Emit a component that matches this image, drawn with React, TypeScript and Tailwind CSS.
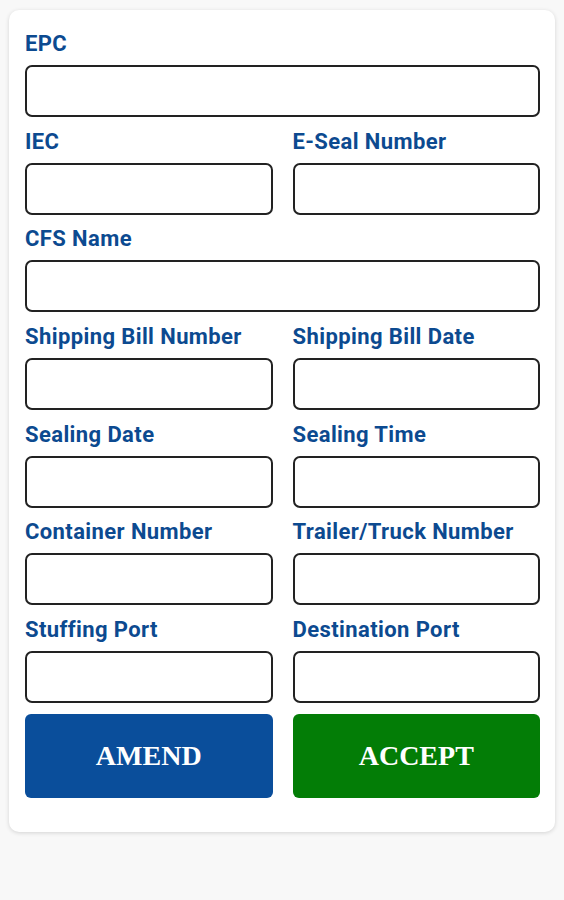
import React from "react";

const Label = ({ children }: { children: React.ReactNode }) => (
  <div className="h-[28px] mb-[7px] text-[22px] leading-[28px] font-bold tracking-[0.4px] text-[#0c4a90] whitespace-nowrap">
    {children}
  </div>
);

const Input = () => (
  <div className="h-[52px] rounded-[7px] border-2 border-[#222222] bg-white" />
);

const Field = ({ label }: { label: string }) => (
  <div className="flex flex-col min-w-0">
    <Label>{label}</Label>
    <Input />
  </div>
);

export default function App() {
  const rows: string[][] = [
    ["EPC"],
    ["IEC", "E-Seal Number"],
    ["CFS Name"],
    ["Shipping Bill Number", "Shipping Bill Date"],
    ["Sealing Date", "Sealing Time"],
    ["Container Number", "Trailer/Truck Number"],
    ["Stuffing Port", "Destination Port"],
  ];
  return (
    <div className="min-h-[900px] w-[564px] bg-[#f8f8f8] pt-[10px] px-[9px] font-['Roboto',sans-serif]">
      <div className="bg-white rounded-[10px] shadow-[0_1px_4px_rgba(0,0,0,0.15)] pt-[20px] pb-[34px] pl-[16px] pr-[15px]">
        <div className="flex flex-col gap-[10.7px]">
          {rows.map((r, i) =>
            r.length === 1 ? (
              <Field key={i} label={r[0]} />
            ) : (
              <div key={i} className="grid grid-cols-2 gap-x-[20px]">
                <Field label={r[0]} />
                <Field label={r[1]} />
              </div>
            )
          )}
          <div className="grid grid-cols-2 gap-x-[20px]">
            <button className="h-[84px] rounded-[6px] bg-[#0a4e9b] text-white text-[28px] font-bold font-['Liberation_Serif',serif]">
              AMEND
            </button>
            <button className="h-[84px] rounded-[6px] bg-[#037d06] text-white text-[28px] font-bold font-['Liberation_Serif',serif]">
              ACCEPT
            </button>
          </div>
        </div>
      </div>
    </div>
  );
}
